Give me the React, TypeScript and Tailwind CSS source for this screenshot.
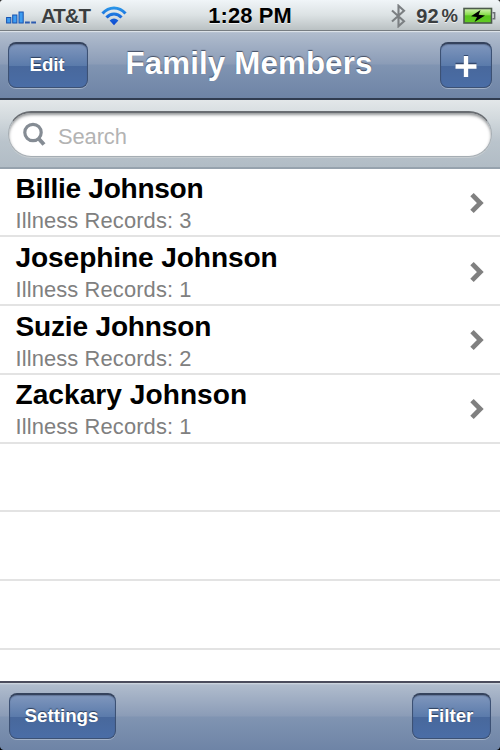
import type { ReactNode } from "react";

const members = [
  { name: "Billie Johnson", records: 3, track: "tracking-[-0.3px]" },
  { name: "Josephine Johnson", records: 1, track: "tracking-[-0.1px]" },
  { name: "Suzie Johnson", records: 2, track: "tracking-[-0.2px]" },
  { name: "Zackary Johnson", records: 1, track: "tracking-[0.04px]" },
];

function BarButton({ className, children }: { className: string; children: ReactNode }) {
  return (
    <button
      className={`flex h-[46px] items-center justify-center rounded-[8px] border border-t-2 border-[#3c5174] border-t-[#35435d] bg-[linear-gradient(180deg,#8097bd_0%,#5b7bab_50%,#48689c_51%,#4a6da6_100%)] text-[18.75px] font-bold text-white shadow-[0_1px_0_#a3b2c8,inset_0_1px_1px_rgba(50,65,95,0.4)] [text-shadow:0_-1px_1px_rgba(30,45,70,0.8)] ${className}`}
    >
      {children}
    </button>
  );
}

function Signal() {
  return (
    <svg className="h-[13px] w-[30px]" viewBox="0 0 30 13">
      <g fill="#3d9cf0" stroke="#1853b0" strokeWidth="1">
        <rect x="0.600" y="6.500" width="4.200" height="5.500" />
        <rect x="6.700" y="4" width="4.200" height="8" />
        <rect x="13" y="1" width="4.200" height="11" />
      </g>
      <path d="M19 11.500h4.800M25.200 11.500h4.800" stroke="#2c5bb0" strokeWidth="1.800" />
    </svg>
  );
}

function Wifi() {
  return (
    <svg className="h-[20px] w-[26px]" viewBox="0 0 26 20">
      <defs>
        <linearGradient id="wifi" x1="0" y1="0" x2="0" y2="20" gradientUnits="userSpaceOnUse">
          <stop offset="0" stopColor="#2b9bea" />
          <stop offset="1" stopColor="#0b43d0" />
        </linearGradient>
      </defs>
      <g fill="none" stroke="url(#wifi)" strokeWidth="3">
        <path d="M1.5 7.6C8 .2 18 .2 24.500 7.600" />
        <path d="M5.500 11.600C9.800 6.700 16.200 6.700 20.500 11.600" />
      </g>
      <path d="M8.600 14.600Q13 10.600 17.400 14.600L13 19.200Z" fill="url(#wifi)" />
    </svg>
  );
}

function Bluetooth() {
  return (
    <svg className="h-[24px] w-[15px]" viewBox="0 0 15 24" fill="none" stroke="#7b7f82" strokeWidth="2.1">
      <path d="M1 6.500 13 17.200 7.500 22.200V1.800L13 6.800 1 17.500" />
    </svg>
  );
}

function Battery() {
  return (
    <svg className="h-[18px] w-[33px]" viewBox="0 0 33 18">
      <defs>
        <linearGradient id="battery" x1="0" y1="0" x2="0" y2="1">
          <stop offset="0" stopColor="#d5f4b4" />
          <stop offset="0.45" stopColor="#86dc48" />
          <stop offset="0.5" stopColor="#58c51c" />
          <stop offset="1" stopColor="#62cc25" />
        </linearGradient>
      </defs>
      <rect x="1" y="1.500" width="27.500" height="14.500" fill="url(#battery)" stroke="#4c5a4c" strokeWidth="1.600" />
      <path d="M29.500 5.800h2.200v6h-2.200" fill="#c9cdd0" stroke="#6c7175" strokeWidth="1.400" />
      <path d="M17.500 3 8 9.200l6 .8-2.500 5L22 8.500l-6.300-.8Z" fill="#000" />
    </svg>
  );
}

function Chevron() {
  return (
    <svg className="mt-[2px] h-[22px] w-[14px]" viewBox="0 0 14 22" fill="none" stroke="#808080" strokeWidth="4.800">
      <path d="M2 2.600 10.300 11 2 19.400" />
    </svg>
  );
}

export default function App() {
  return (
    <div className="relative flex h-[750px] w-[500px] flex-col overflow-hidden bg-white font-['Liberation_Sans',Arial,sans-serif]">
      <header className="grid h-[31px] shrink-0 grid-cols-[1fr_auto_1fr] items-center border-b border-[#777d82] bg-[linear-gradient(180deg,#f0f5f8_0%,#dce2e4_50%,#bac1c3_100%)] text-[20.500px] font-bold leading-[30px] [text-shadow:0_1px_0_rgba(255,255,255,0.7)]">
        <div className="flex items-center pl-[6px] text-[#3b3e40]">
          <div className="pt-[4px]"><Signal /></div>
          <span className="ml-[5px] pt-[1px] tracking-[-1px]">AT&amp;T</span>
          <div className="ml-[11px]"><Wifi /></div>
        </div>
        <span className="text-[21.900px] tracking-[0.1px] text-black">1:28 PM</span>
        <div className="flex items-center justify-end pr-[4px] text-[#3b3e40]">
          <Bluetooth />
          <span className="ml-[10px] text-[20px]">92</span>
          <span className="ml-[3px] text-[18.500px]">%</span>
          <div className="ml-[5px] h-[18px]"><Battery /></div>
        </div>
      </header>

      <nav className="flex h-[69px] shrink-0 items-start justify-between border-b-2 border-[#303c51] bg-[linear-gradient(180deg,#cdd5df_0px,#b0bccd_2px,#8b9cb7_33px,#8094b2_34px,#6e84a6_67px)] px-[8px] pt-[11px] shadow-[inset_0_1px_0_#dce2e8]">
        <BarButton className="w-[80px] pb-[1px] tracking-[-0.1px]"><span className="mr-[2px]">Edit</span></BarButton>
        <h1 className="mr-[30px] mt-[3px] text-[31.250px] font-bold leading-[38px] tracking-[0.15px] text-white [text-shadow:0_-1px_1px_rgba(40,50,70,0.75)]">
          Family Members
        </h1>
        <BarButton className="w-[52px]">
          <svg className="h-[22px] w-[22px]" viewBox="0 0 22 22">
            <path d="M11 0v21M.5 10h21" stroke="#34496f" strokeWidth="4.400" />
            <path d="M11 1v21M.5 11.500h21" stroke="#fff" strokeWidth="4.400" />
          </svg>
        </BarButton>
      </nav>

      <div className="h-[68.500px] shrink-0 border-b-2 border-[#96a2ad] bg-[linear-gradient(180deg,#e3e7e9_0%,#d2d9dd_28%,#bac4cc_62%,#b1bcc5_100%)] px-[8px] pt-[11px]">
        <div className="flex h-[46px] items-center rounded-full border border-t-2 border-[#a5adb3] border-t-[#696d72] bg-white pl-[14px] shadow-[0_1px_0_#c8ced2,inset_0_2px_3px_rgba(60,65,70,0.55)]">
          <svg className="h-[25px] w-[23px]" viewBox="0 0 23 25" fill="none" stroke="#858c94">
            <circle cx="10" cy="10.500" r="8.200" strokeWidth="3.200" />
            <path d="m15.500 16.500 5.500 6" strokeWidth="4" />
          </svg>
          <span className="ml-[12px] pt-[5px] text-[21.900px] tracking-[-0.1px] text-[#b3b3b3]">Search</span>
        </div>
      </div>

      <main className="grid h-[512.500px] shrink-0 auto-rows-[68.750px] overflow-hidden bg-white">
        {members.map((m) => (
          <div key={m.name} className="flex items-center justify-between border-b-2 border-[#e3e3e3] pl-[15.500px] pr-[16px]">
            <div className="flex h-full flex-col">
              <span className={`mt-[3.500px] text-[28.100px] font-bold leading-[34px] text-black ${m.track}`}>{m.name}</span>
              <span className="text-[21.900px] leading-[30px] tracking-[0.120px] text-[#808080]">Illness Records: {m.records}</span>
            </div>
            <Chevron />
          </div>
        ))}
        {[0, 1, 2].map((i) => (
          <div key={i} className="border-b-2 border-[#e3e3e3]" />
        ))}
      </main>

      <footer className="flex h-[69px] shrink-0 items-start justify-between border-t-2 border-[#4b4c5c] bg-[linear-gradient(180deg,#d4dbe2_0px,#b0bccd_2px,#8b9cb7_33px,#8094b2_34px,#6e84a6_67px)] px-[9px] pt-[10px]">
        <BarButton className="w-[107px] pr-[2px]">Settings</BarButton>
        <BarButton className="w-[79px] pr-[2px]">Filter</BarButton>
      </footer>
      <div className="pointer-events-none absolute bottom-0 left-0 h-[4px] w-[4px] bg-[radial-gradient(circle_at_100%_0,transparent_3.500px,#000_4.500px)]" />
      <div className="pointer-events-none absolute bottom-0 right-0 h-[4px] w-[4px] bg-[radial-gradient(circle_at_0_0,transparent_3.500px,#000_4.500px)]" />
      <div className="pointer-events-none absolute left-0 top-0 h-[3px] w-[3px] bg-[radial-gradient(circle_at_100%_100%,transparent_2.500px,#333_3.500px)]" />
      <div className="pointer-events-none absolute right-0 top-0 h-[3px] w-[3px] bg-[radial-gradient(circle_at_0_100%,transparent_2.500px,#333_3.500px)]" />
    </div>
  );
}
